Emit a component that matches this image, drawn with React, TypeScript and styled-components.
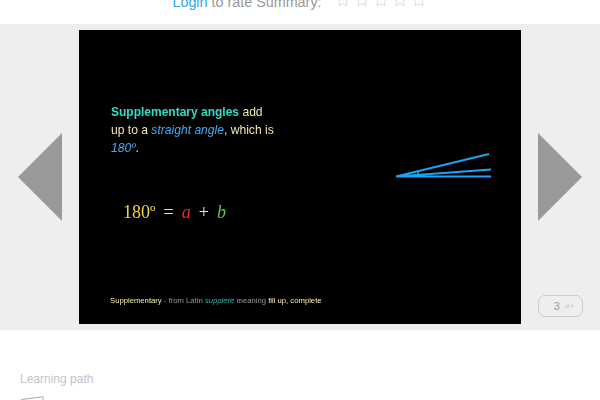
import styled, { createGlobalStyle, css } from "styled-components"

const GlobalStyle = createGlobalStyle`
  html, body {
    margin: 0;
    padding: 0;
    background: #fff;
    overflow: hidden;
    font-family: "Liberation Sans", Arial, sans-serif;
  }
`

const Star = () => (
  <StarIcon viewBox="0 0 14 14">
    <path d="M7 .8l1.9 4.1 4.5.5-3.3 3 .9 4.4L7 10.6l-4 2.2.9-4.4-3.3-3 4.5-.5z" />
  </StarIcon>
)

export default function App() {
  return (
    <>
      <GlobalStyle />
      <RatingBar>
        <RatingText>
          <LoginLink href="#">Login</LoginLink> to rate Summary:
        </RatingText>
        <Stars>
          {[0, 1, 2, 3, 4].map((i) => (
            <Star key={i} />
          ))}
        </Stars>
      </RatingBar>

      <Stage>
        <Side>
          <Arrow $dir="left" />
        </Side>
        <Slide>
          <SlideTop>
            <Intro>
              <Term>Supplementary angles</Term> add
              <br />
              up to a <Em>straight angle</Em>, which is
              <br />
              <Em>180º</Em>.
            </Intro>
            <AngleDrawing viewBox="0 0 100 32">
              <path d="M1 26.5L94 4M1 26.5L96 19.5M1 26.5H96" />
              <AngleDot cx="23" cy="23" r="0.9" />
            </AngleDrawing>
          </SlideTop>
          <Equation>
            <Yellow>180º</Yellow>
            <Cream>=</Cream>
            <Red>a</Red>
            <White>+</White>
            <Green>b</Green>
          </Equation>
          <Footnote>
            <FootCream>Supplementary</FootCream> - from Latin <FootLatin>supplere</FootLatin> meaning{" "}
            <FootCream>fill up, complete</FootCream>
          </Footnote>
        </Slide>
        <Side $nudge>
          <Arrow $dir="right" />
          <PageBadge>
            <PageNumber>3</PageNumber>
            <PageTotal>of 4</PageTotal>
          </PageBadge>
        </Side>
      </Stage>

      <Section>
        <SectionTitle>Learning path</SectionTitle>
        <PathIcon viewBox="0 0 24 6">
          <path d="M1 3.5L23 .8V6" />
        </PathIcon>
      </Section>
    </>
  )
}

const slideLayer = css`
  transform: translateZ(0);
`

const RatingBar = styled.div`
  height: 24px;
  overflow: hidden;
  display: flex;
  justify-content: center;
  gap: 14px;
  padding-right: 2px;
  color: #999;
`

const RatingText = styled.div`
  font-size: 14.35px;
  line-height: 18px;
  margin-top: -7px;
  white-space: nowrap;
`

const LoginLink = styled.a`
  color: #2ea6ee;
  text-decoration: none;
`

const Stars = styled.div`
  display: flex;
  gap: 5px;
  margin-top: -7px;
  height: 14px;
`

const StarIcon = styled.svg`
  width: 14px;
  height: 14px;
  fill: #fff;
  stroke: #ddd;
  stroke-width: 1;
`

const Stage = styled.div`
  height: 306px;
  background: #eee;
  display: flex;
  align-items: center;
`

const Side = styled.div<{ $nudge?: boolean }>`
  position: relative;
  width: 79px;
  height: 100%;
  box-sizing: border-box;
  padding-right: ${(p) => (p.$nudge ? "1px" : "0")};
  display: flex;
  align-items: center;
  justify-content: center;
`

const Arrow = styled.div<{ $dir: "left" | "right" }>`
  width: 0;
  height: 0;
  border-top: 44px solid transparent;
  border-bottom: 44px solid transparent;
  ${(p) =>
    p.$dir === "left" ? "border-right: 44px solid #999;" : "border-left: 44px solid #999;"}
`

const Slide = styled.div`
  width: 442px;
  height: 294px;
  background: #000;
  box-sizing: border-box;
  padding: 73px 26px 0 32px;
  display: flex;
  flex-direction: column;
`

const SlideTop = styled.div`
  display: flex;
  justify-content: space-between;
  align-items: flex-start;
`

const Intro = styled.div`
  ${slideLayer}
  width: 180px;
  font-size: 12.1px;
  line-height: 18px;
  color: #efe6b0;
`

const Term = styled.span`
  color: #2fdcc4;
  font-weight: 700;
  font-size: 12px;
`

const Em = styled.em`
  color: #48a8f0;
`

const Cream = styled.span`
  color: #efe6b0;
`

const White = styled.span`
  color: #f5f1d8;
`

const AngleDrawing = styled.svg`
  width: 100px;
  height: 32px;
  margin-top: 47px;
  fill: none;
  stroke: #18a4f5;
  stroke-width: 2;
`

const AngleDot = styled.circle`
  fill: #6cc83c;
  stroke: none;
`

const Equation = styled.div`
  ${slideLayer}
  display: flex;
  align-items: baseline;
  gap: 8px;
  margin: 19px 0 0 12px;
  font-family: "Liberation Serif", "Times New Roman", serif;
  font-size: 18px;
  line-height: 22px;
`

const Yellow = styled.span`
  color: #eed24e;
`

const Red = styled.i`
  color: #e82a2a;
`

const Green = styled.i`
  color: #5cc83c;
`

const Footnote = styled.div`
  ${slideLayer}
  margin: 73px 0 0 -1px;
  font-size: 7.7px;
  line-height: 10px;
  color: #999;
  white-space: nowrap;
`

const FootCream = styled.span`
  color: #f4eeb0;
`

const FootLatin = styled.i`
  color: #2fb8a4;
`

const PageBadge = styled.div`
  position: absolute;
  left: 17px;
  top: 271px;
  width: 45px;
  height: 22px;
  box-sizing: border-box;
  border: 1px solid #ccc;
  border-radius: 7px;
  padding-left: 6px;
  display: flex;
  align-items: center;
  justify-content: center;
  gap: 5px;
  color: #999;
`

const PageNumber = styled.span`
  font-size: 11px;
`

const PageTotal = styled.span`
  font-size: 5px;
  color: #bbb;
`

const Section = styled.div`
  padding: 42px 20px 0;
`

const SectionTitle = styled.div`
  font-size: 12px;
  line-height: 14px;
  color: #c4c4c4;
`

const PathIcon = styled.svg`
  display: block;
  width: 24px;
  height: 6px;
  margin-top: 10px;
  fill: none;
  stroke: #aaa;
  stroke-width: 1;
`
